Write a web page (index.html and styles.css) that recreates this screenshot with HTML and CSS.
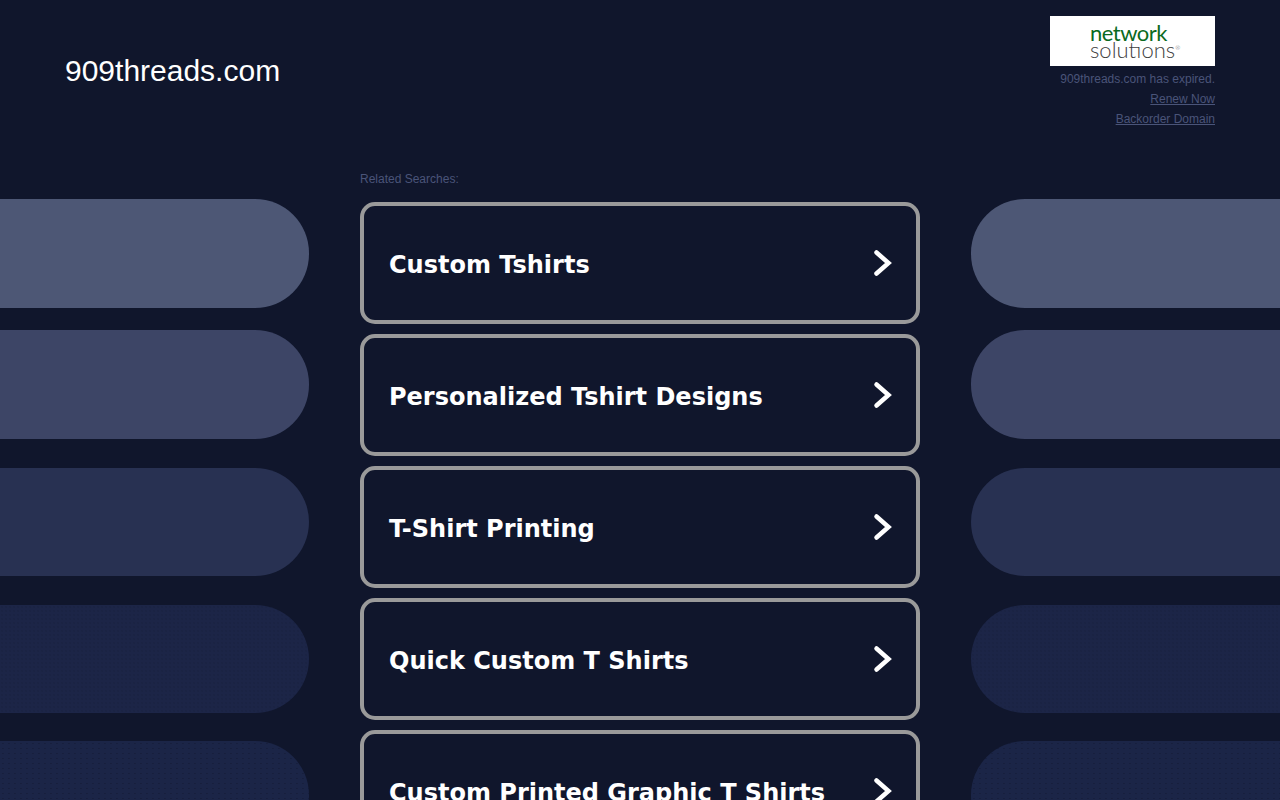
FILE: index.html
```html
<!DOCTYPE html>
<html lang="en">
<head>
  <meta charset="UTF-8" />
  <meta name="viewport" content="width=device-width, initial-scale=1.0"/>
  <title>909threads.com</title>
  <link rel="stylesheet" href="styles.css">
</head>
<body>

  <div class="side side-left">
    <div class="pill pill-1"></div>
    <div class="pill pill-2"></div>
    <div class="pill pill-3"></div>
    <div class="pill pill-4"></div>
    <div class="pill pill-5"></div>
  </div>

  <div class="side side-right">
    <div class="pill pill-1"></div>
    <div class="pill pill-2"></div>
    <div class="pill pill-3"></div>
    <div class="pill pill-4"></div>
    <div class="pill pill-5"></div>
  </div>

  <div class="page">
    <div class="header">
      <h1 class="domain">909threads.com</h1>
      <div class="expired">
        <div class="logo">
          <span class="logo-top">network</span>
          <span class="logo-bottom">solutıons<sup>®</sup></span>
        </div>
        <p>909threads.com has expired.</p>
        <p><a href="#">Renew Now</a></p>
        <p><a href="#">Backorder Domain</a></p>
      </div>
    </div>

    <div class="results">
      <p class="related">Related Searches:</p>
      <a class="result" href="#">
        <span>Custom Tshirts</span>
        <svg class="chevron" viewBox="0 0 20 28"><path d="M4.5 3.5L16.5 14L4.5 24.5"/></svg>
      </a>
      <a class="result" href="#">
        <span>Personalized Tshirt Designs</span>
        <svg class="chevron" viewBox="0 0 20 28"><path d="M4.5 3.5L16.5 14L4.5 24.5"/></svg>
      </a>
      <a class="result" href="#">
        <span>T-Shirt Printing</span>
        <svg class="chevron" viewBox="0 0 20 28"><path d="M4.5 3.5L16.5 14L4.5 24.5"/></svg>
      </a>
      <a class="result" href="#">
        <span>Quick Custom T Shirts</span>
        <svg class="chevron" viewBox="0 0 20 28"><path d="M4.5 3.5L16.5 14L4.5 24.5"/></svg>
      </a>
      <a class="result" href="#">
        <span>Custom Printed Graphic T Shirts</span>
        <svg class="chevron" viewBox="0 0 20 28"><path d="M4.5 3.5L16.5 14L4.5 24.5"/></svg>
      </a>
    </div>
  </div>

</body>
</html>
```

FILE: styles.css
```css
html, body {
  height: 800px;
  overflow: hidden;
}

body {
  margin: 0;
  background: #10162c;
  font-family: "Liberation Sans", Arial, sans-serif;
  position: relative;
}

/* background pills, they sit behind the page */
.side {
  position: absolute;
  top: 199px;
  width: 309px;
  display: flex;
  flex-direction: column;
}

.side-left {
  left: 0;
}

.side-right {
  right: 0;
}

.pill {
  height: 109px;
  flex: none;
}

.side-left .pill {
  border-radius: 0 54px 54px 0;
}

.side-right .pill {
  border-radius: 54px 0 0 54px;
}

.pill-1 {
  background: #4d5775;
}

.pill-2 {
  background: #3d4566;
  margin-top: 22px;
}

.pill-3 {
  background: #283152;
  height: 108px;
  margin-top: 29px;
}

.pill-4 {
  background-color: #1c2547;
  background-image: radial-gradient(rgba(16,22,44,0.2) 0.6px, transparent 1px);
  background-size: 4px 4px;
  height: 108px;
  margin-top: 29px;
}

.pill-5 {
  background-color: #1b2547;
  background-image: radial-gradient(rgba(16,22,44,0.35) 0.7px, transparent 1.1px);
  background-size: 6px 5px;
  margin-top: 28px;
}

.page {
  position: relative;
}

.header {
  display: flex;
  justify-content: space-between;
  padding: 16px 65px 0;
  height: 156px;
}

.domain {
  margin: 38px 0 0;
  font-size: 30px;
  font-weight: normal;
  line-height: 34px;
  color: white;
}

.expired {
  width: 165px;
  text-align: right;
  font-size: 12px;
  color: #4a5479;
}

.expired p {
  margin: 0;
  line-height: 20px;
  white-space: nowrap;
}

.expired a {
  color: #4a5479;
}

.logo {
  background: white;
  box-sizing: border-box;
  height: 50px;
  margin-bottom: 3px;
  padding: 8px 0 0 40px;
  display: flex;
  flex-direction: column;
  font-family: "Lato", sans-serif;
  text-align: left;
}

.logo-top {
  color: #0b6a1e;
  font-size: 22px;
  letter-spacing: -0.5px;
  line-height: 17px;
}

.logo-bottom {
  color: #3f3f3f;
  font-size: 22px;
  font-weight: 300;
  line-height: 17px;
}

.logo-bottom sup {
  font-size: 6px;
  line-height: 0;
}

.results {
  width: 560px;
  margin: 0 auto;
}

.related {
  margin: 0 0 16px;
  font-size: 12px;
  line-height: 14px;
  color: #4a5479;
}

.result {
  display: flex;
  align-items: center;
  justify-content: space-between;
  box-sizing: border-box;
  height: 122px;
  margin-bottom: 10px;
  padding: 0 24px 0 25px;
  border: 4px solid #9a9a9a;
  border-radius: 15px;
  color: white;
  text-decoration: none;
  font-family: "DejaVu Sans", Verdana, sans-serif;
  font-size: 24px;
  font-weight: bold;
}

.result span {
  padding-top: 4px;
}

.chevron {
  width: 20px;
  height: 28px;
  fill: none;
  stroke: white;
  stroke-width: 4.5;
  stroke-linecap: round;
}
```
